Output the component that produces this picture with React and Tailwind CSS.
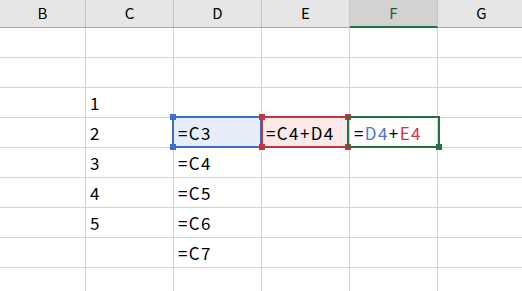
const COLS = ['B', 'C', 'D', 'E', 'F', 'G'];
const WIDTHS = ['w-[86px]', 'w-[88px]', 'w-[88px]', 'w-[88px]', 'w-[88px]', 'w-[88px]'];

// cell text by row, indexed by column
const ROWS = [
  {},
  {},
  { C: '1' },
  { C: '2', D: '=C3', E: '=C4+D4', F: 'ref' },
  { C: '3', D: '=C4' },
  { C: '4', D: '=C5' },
  { C: '5', D: '=C6' },
  { D: '=C7' },
  {},
];

// tint for cells referenced by the formula being edited
const FILL = { 3: { D: 'bg-[#e8eef9]', E: 'bg-[#fbe9e9]' } };

function Cell({ value, width, fill = '' }) {
  return (
    <div className={`${width} ${fill} shrink-0 h-full border-r border-[#d4d4d4] flex items-center pl-[4px] overflow-hidden whitespace-nowrap`}>
      {value === 'ref' ? (
        <span>
          =<span className="text-[#4a78d6]">D4</span>+<span className="text-[#d0363f]">E4</span>
        </span>
      ) : (
        value
      )}
    </div>
  );
}

// range outline drawn over the grid, with square grips on its corners
function RefBox({ className, color, grips }) {
  return (
    <div className={`absolute top-[116px] h-[32px] border-2 ${className}`}>
      {grips.includes('tl') && <div className={`absolute -left-[4px] -top-[4px] w-[6px] h-[6px] ${color}`} />}
      {grips.includes('bl') && <div className={`absolute -left-[4px] -bottom-[4px] w-[6px] h-[6px] ${color}`} />}
      {grips.includes('tr') && <div className={`absolute -right-[4px] -top-[4px] w-[6px] h-[6px] ${color}`} />}
      {grips.includes('br') && <div className={`absolute -right-[4px] -bottom-[4px] w-[6px] h-[6px] ${color}`} />}
    </div>
  );
}

export default function App() {
  return (
    <div className="relative w-[522px] h-[291px] overflow-hidden bg-white text-black font-['Noto_Sans_CJK_JP',sans-serif]">
      {/* column headers */}
      <div className="flex h-[28px] bg-[#e6e6e6]">
        {COLS.map((c, i) => (
          <div
            key={c}
            className={`${WIDTHS[i]} shrink-0 h-full flex items-center justify-center text-[15px] border-r border-[#c6c6c6] ${
              c === 'F'
                ? 'bg-[#d2d2d2] text-[#1c5e3a] border-b-2 border-b-[#217346]'
                : 'border-b border-b-[#a6a6a6]'
            }`}
          >
            {c}
          </div>
        ))}
      </div>

      {/* grid */}
      <div className="text-[17px] tracking-[1.4px]">
        {ROWS.map((r, ri) => (
          <div key={ri} className="flex h-[30px] border-b border-[#d4d4d4]">
            {COLS.map((c, i) => (
              <Cell key={c} value={r[c]} width={WIDTHS[i]} fill={FILL[ri]?.[c]} />
            ))}
          </div>
        ))}
      </div>

      <RefBox className="left-[172px] w-[90px] border-[#3d6fca]" color="bg-[#3d6fca]" grips={['tl', 'bl']} />
      <RefBox className="left-[261px] w-[88px] border-[#c4363f]" color="bg-[#c4363f]" grips={['tl', 'bl', 'tr', 'br']} />
      {/* active cell */}
      <RefBox className="left-[347px] w-[93px] border-[#217346]" color="bg-[#217346]" grips={['br']} />
    </div>
  );
}
